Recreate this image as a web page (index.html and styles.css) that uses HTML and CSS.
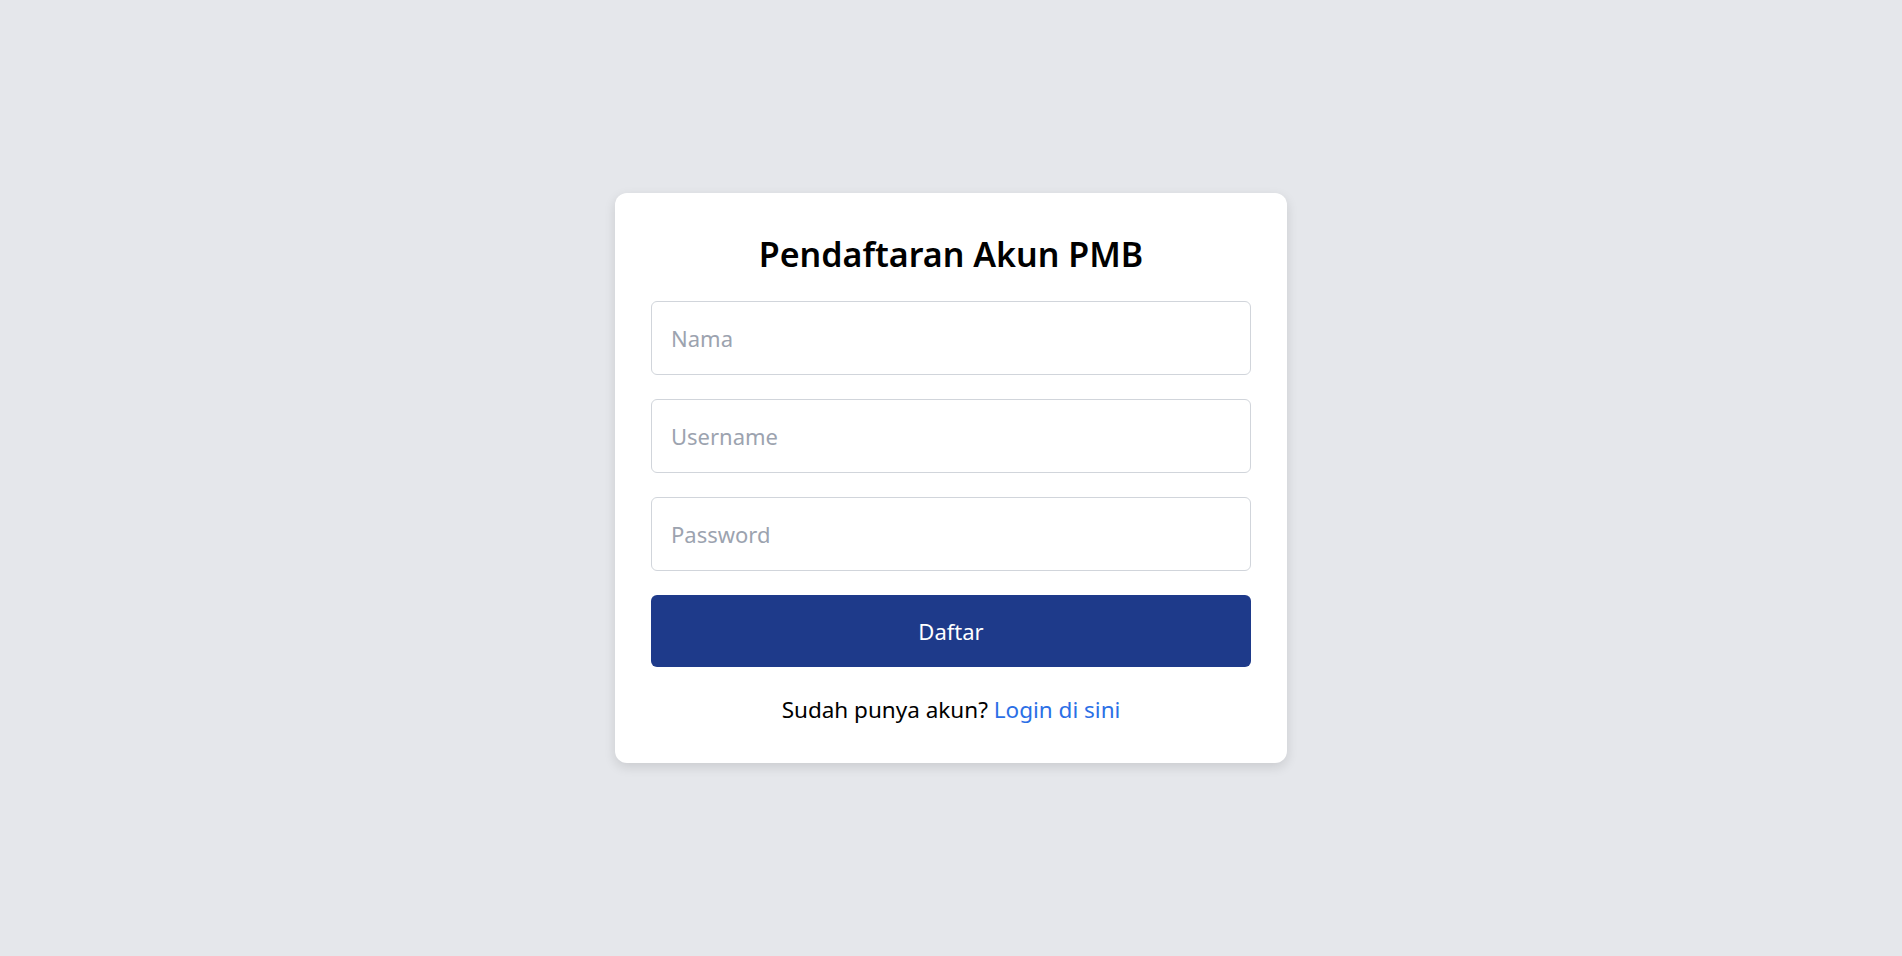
FILE: index.html
```html
<!DOCTYPE html>
<html lang="id">
<head>
<meta charset="utf-8">
<title>Pendaftaran Akun PMB</title>
<link rel="stylesheet" href="styles.css">
</head>
<body>
<main class="card">
  <h2 class="title">Pendaftaran Akun PMB</h2>
  <form class="form">
    <input class="field" type="text" placeholder="Nama">
    <input class="field" type="text" placeholder="Username">
    <input class="field" type="password" placeholder="Password">
    <button class="btn" type="button">Daftar</button>
  </form>
  <p class="footer">Sudah punya akun? <a class="link" href="#">Login di sini</a></p>
</main>
</body>
</html>
```
FILE: styles.css
```css
* { box-sizing: border-box; }
html, body { margin: 0; padding: 0; }
body {
  background: #e5e7eb;
  font-family: "Noto Sans", "Open Sans", sans-serif;
  min-height: 100vh;
  display: flex;
  align-items: center;
  justify-content: center;
}
.card {
  width: 672px;
  background: #ffffff;
  border-radius: 12px;
  padding: 36px;
  box-shadow: 0 4px 12px rgba(0, 0, 0, 0.12);
}
.title {
  margin: 0 0 24px;
  height: 48px;
  line-height: 50px;
  text-align: center;
  font-size: 34px;
  font-weight: 600;
  color: #000;
}
.form {
  display: flex;
  flex-direction: column;
  gap: 24px;
}
.field {
  height: 74px;
  width: 100%;
  border: 1px solid #d1d5db;
  border-radius: 6px;
  padding: 0 19px;
  font-family: inherit;
  font-size: 22px;
  color: #111;
  background: #fff;
  outline: none;
}
.field::placeholder { color: #9ca3af; }
.btn {
  height: 72px;
  width: 100%;
  border: none;
  border-radius: 6px;
  background: #1e3a8a;
  color: #fff;
  font-family: inherit;
  font-size: 22px;
  cursor: pointer;
}
.footer {
  margin: 26px 0 0;
  line-height: 34px;
  text-align: center;
  font-size: 22.5px;
  color: #000;
}
.link { color: #2b6fe6; text-decoration: none; }
```
